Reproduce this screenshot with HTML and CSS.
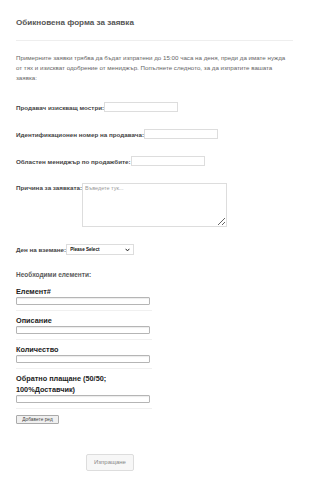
FILE: index.html
```html
<!DOCTYPE html>
<html lang="bg">
<head>
<meta charset="utf-8">
<title>Обикновена форма за заявка</title>
<link rel="stylesheet" href="styles.css">
</head>
<body>
<div class="page">
  <h1 class="title">Обикновена форма за заявка</h1>
  <div class="rule"></div>
  <p class="intro">Примерните заявки трябва да бъдат изпратени до 15:00 часа на деня, преди да имате нужда<br>от тях и изискват одобрение от мениджър. Попълнете следното, за да изпратите вашата<br>заявка:</p>

  <div class="row first"><label class="lbl">Продавач изискващ мостри:</label><input class="txt" type="text"></div>
  <div class="row"><label class="lbl">Идентификационен номер на продавача:</label><input class="txt" type="text"></div>
  <div class="row"><label class="lbl">Областен мениджър по продажбите:</label><input class="txt" type="text"></div>
  <div class="row top"><label class="lbl">Причина за заявката:</label><textarea class="area" placeholder="Въведете тук..."></textarea></div>
  <div class="row"><label class="lbl">Ден на вземане:</label>
    <div class="selwrap">
      <select class="sel"><option>Please Select</option></select>
      <svg class="chev" width="5" height="4" viewBox="0 0 5 4"><path d="M0.6 0.8 L2.5 2.9 L4.4 0.8" fill="none" stroke="#222" stroke-width="1"/></svg>
    </div>
  </div>

  <div class="needed">Необходими елементи:</div>

  <div class="items">
    <div class="item"><div class="ilbl">Елемент#</div><input class="itxt" type="text"></div>
    <div class="item"><div class="ilbl">Описание</div><input class="itxt" type="text"></div>
    <div class="item"><div class="ilbl">Количество</div><input class="itxt" type="text"></div>
    <div class="item"><div class="ilbl">Обратно плащане (50/50; 100%Доставчик)</div><input class="itxt" type="text"></div>
  </div>

  <button class="addbtn" type="button">Добавете ред</button>
  <div class="submitrow"><button class="submit" type="button">Изпращане</button></div>
</div>
</body>
</html>
```

FILE: styles.css
```css
html, body {
  margin: 0;
  padding: 0;
  background: #ffffff;
}
body {
  font-family: "Liberation Sans", Arial, sans-serif;
  color: #444;
}
.page {
  padding: 0 17px 0 16px;
}
.title {
  margin: 17px 0 0;
  font-size: 8.1px;
  line-height: 12px;
  font-weight: bold;
  color: #555;
}
.rule {
  margin-top: 11px;
  border-top: 1px solid #eeeeee;
}
.intro {
  margin: 12px 0 0;
  font-size: 6.2px;
  line-height: 10px;
  color: #666;
  white-space: nowrap;
}
.row {
  display: flex;
  align-items: center;
  margin-top: 17px;
}
.row.first {
  margin-top: 19px;
}
.row.top {
  align-items: flex-start;
}
.lbl {
  font-size: 6.25px;
  font-weight: bold;
  color: #444;
  white-space: nowrap;
}
.row.top .lbl {
  margin-top: 1px;
}
.txt {
  box-sizing: border-box;
  width: 74px;
  height: 10px;
  margin: 0;
  padding: 0;
  border: 1px solid #dddddd;
  background: #fff;
}
.area {
  box-sizing: border-box;
  width: 145px;
  height: 44px;
  margin: 0;
  padding: 1px 2px;
  border: 1px solid #dddddd;
  font-family: "Liberation Sans", Arial, sans-serif;
  font-size: 5.5px;
  resize: vertical;
}
.area::placeholder {
  color: #999;
}
.selwrap {
  position: relative;
  width: 68px;
  height: 11px;
  line-height: 0;
  font-size: 0;
}
.sel {
  display: block;
  -webkit-appearance: none;
  appearance: none;
  box-sizing: border-box;
  width: 68px;
  height: 11px;
  margin: 0;
  padding: 0 0 0 3px;
  border: 1px solid #dddddd;
  border-radius: 0;
  background: #fff;
  font-family: "Liberation Sans", Arial, sans-serif;
  font-size: 4.6px;
  line-height: 9px;
  font-weight: bold;
  color: #111;
}
.chev {
  position: absolute;
  right: 4px;
  top: 4px;
}
.needed {
  margin-top: 16px;
  font-size: 6.5px;
  line-height: 8px;
  font-weight: bold;
  color: #5a5a5a;
}
.items {
  margin-top: 3px;
  width: 136px;
}
.item {
  padding-top: 4px;
  padding-bottom: 5px;
  border-bottom: 1px solid #f0f0f0;
}
.ilbl {
  font-size: 7.3px;
  line-height: 11px;
  font-weight: bold;
  color: #222;
}
.itxt {
  display: block;
  box-sizing: border-box;
  width: 134px;
  height: 8px;
  margin: 0;
  padding: 0;
  border: 1px solid #b5b5b5;
  border-radius: 1px;
  box-shadow: inset 0 1px 1px rgba(0,0,0,0.08);
  background: #fff;
}
.addbtn {
  display: block;
  box-sizing: border-box;
  margin: 6px 0 0;
  width: 43px;
  height: 9px;
  padding: 0;
  border: 1px solid #aaaaaa;
  border-radius: 1px;
  background: #f0f0f0;
  font-family: "Liberation Sans", Arial, sans-serif;
  font-size: 4.8px;
  color: #444;
}
.submitrow {
  margin-top: 26px;
  padding-left: 70px;
}
.submit {
  box-sizing: border-box;
  width: 48px;
  height: 17px;
  margin: 0;
  padding: 0;
  border: 1px solid #dddddd;
  border-radius: 2px;
  background: #f7f7f7;
  font-family: "Liberation Sans", Arial, sans-serif;
  font-size: 6px;
  color: #888;
}
```
